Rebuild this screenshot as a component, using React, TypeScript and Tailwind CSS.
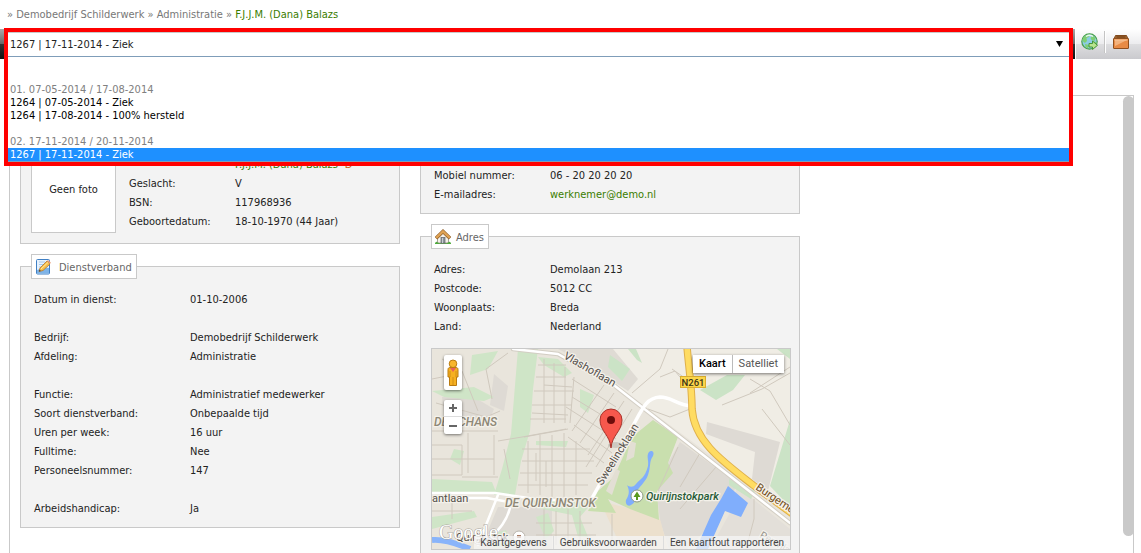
import type { ReactNode } from "react";

type Row = { label: string; value: ReactNode; spaced?: boolean };

const employment: Row[] = [
  { label: "Datum in dienst:", value: "01-10-2006" },
  { label: "Bedrijf:", value: "Demobedrijf Schilderwerk", spaced: true },
  { label: "Afdeling:", value: "Administratie" },
  { label: "Functie:", value: "Administratief medewerker", spaced: true },
  { label: "Soort dienstverband:", value: "Onbepaalde tijd" },
  { label: "Uren per week:", value: "16 uur" },
  { label: "Fulltime:", value: "Nee" },
  { label: "Personeelsnummer:", value: "147" },
  { label: "Arbeidshandicap:", value: "Ja", spaced: true },
];

const person: Row[] = [
  {
    label: "",
    value: (
      <a href="#persoon" className="text-[#3a7d00]">
        F.J.J.M. (Dana) Balazs <span className="text-[#c86414]">-D</span>
      </a>
    ),
  },
  { label: "Geslacht:", value: "V" },
  { label: "BSN:", value: "117968936" },
  { label: "Geboortedatum:", value: "18-10-1970 (44 Jaar)" },
];

const contact: Row[] = [
  { label: "Mobiel nummer:", value: "06 - 20 20 20 20" },
  {
    label: "E-mailadres:",
    value: (
      <a href="mailto:werknemer@demo.nl" className="text-[#3a7d00]">
        werknemer@demo.nl
      </a>
    ),
  },
];

const address: Row[] = [
  { label: "Adres:", value: "Demolaan 213" },
  { label: "Postcode:", value: "5012 CC" },
  { label: "Woonplaats:", value: "Breda" },
  { label: "Land:", value: "Nederland" },
];

function Rows({ rows, labelWidth }: { rows: Row[]; labelWidth: string }) {
  return (
    <table className="border-collapse leading-[19px] text-[#222]">
      <tbody>
        {rows.map((r, i) => (
          <tr key={i}>
            <th scope="row" className={`${labelWidth} p-0 text-left font-normal ${r.spaced ? "pt-[19px]" : ""}`}>
              {r.label}
            </th>
            <td className={`p-0 whitespace-nowrap ${r.spaced ? "pt-[19px]" : ""}`}>{r.value}</td>
          </tr>
        ))}
      </tbody>
    </table>
  );
}

function Legend({ icon, children }: { icon: ReactNode; children: ReactNode }) {
  return (
    <legend className="border border-[#c9c9c9] bg-white pr-1 pl-[3px] text-[#666]">
      <span className="flex h-[23px] items-center gap-[5px]">
        {icon}
        <span className="leading-[19px] pt-px">{children}</span>
      </span>
    </legend>
  );
}

function EditIcon() {
  return (
    <svg viewBox="0 0 16 16" className="mr-[3px] size-4" aria-hidden="true">
      <rect x="1.500" y=".5" width="13" height="14.500" rx="1" fill="#e6f1fc" stroke="#3f7fc4" />
      <path d="M4 3h6M4 5.500h5M4 8h3" stroke="#a6c8ec" />
      <path d="M2 11c4-1 7-3 12-2v5.500H2z" fill="#7db3e8" />
      <path d="M4 12.500 5 9 12 2l3 3-7 6.500z" fill="#f7c04a" stroke="#b5752b" strokeWidth=".8" />
      <path d="M6 10 13 3.500" stroke="#ffe6a0" />
      <path d="m12 2 1-1 2.800 2.500L15 5z" fill="#e8a07c" />
      <path d="m4 12.500.6-1.800 1.200 1.200z" fill="#333" />
    </svg>
  );
}

function HouseIcon() {
  return (
    <svg viewBox="0 0 16 16" className="size-4" aria-hidden="true">
      <path d="M0 15c.5-3 3-2.500 4-1.500h8c1-1 3.500-1.500 4 1.500z" fill="#4faa3c" />
      <path d="M2.500 8 8 3l5.500 5v6h-11z" fill="#f5f1ea" stroke="#8f8a83" strokeWidth=".8" />
      <path d="M1 9.200 8 2.500l7 6.700" fill="none" stroke="#8a5a26" strokeWidth="3.600" />
      <path d="M1.200 8.800 8 2.400l6.800 6.400" fill="none" stroke="#dfa253" strokeWidth="2.400" />
      <rect x="6" y="8.500" width="4" height="5.500" fill="#8e959c" stroke="#5f656b" strokeWidth=".7" />
      <path d="M7.500 9v5" stroke="#c8cdd2" />
      <path d="M0 15c0-2 2-2.500 4-1v1zM12 15v-1c2-1.500 4-1 4 1z" fill="#4faa3c" />
    </svg>
  );
}

function GlobeIcon() {
  return (
    <svg viewBox="0 0 18 18" className="size-[18px]" aria-hidden="true">
      <circle cx="8.500" cy="8.500" r="7.700" fill="#8ccbe4" stroke="#49a04c" strokeWidth="1.200" />
      <path d="M2 5c2-3 5-4 7-3.500L8 4 5.500 5 6 8 4 10 1.500 8zM11 2l3.500 3-1 3-3-1-1-2zM4 11l4 1-1 3.500L4.500 14zM11 8l4.500 1-1 4-3 2.500z" fill="#7fcf72" />
      <path d="M5 3.500c2-1.500 5-1.500 7 0" fill="none" stroke="#e4f6f0" strokeWidth="1.500" />
      <path d="M8 10.500h3.500V8l5 4.300-5 4.200V14H8z" fill="#b9e48f" stroke="#3c8f31" strokeWidth=".9" />
    </svg>
  );
}

function CaseIcon() {
  return (
    <svg viewBox="0 0 16 14" className="h-[14px] w-4" aria-hidden="true">
      <path d="M2.500.5h11L15 4H1z" fill="#a2672f" stroke="#80491c" />
      <path d="M3.500 2h9" stroke="#6b3b14" />
      <rect x=".5" y="3.500" width="15" height="10" rx=".5" fill="#e88b45" stroke="#8f4f1d" />
      <path d="M2 5h12L2 11z" fill="#f3b27c" />
      <path d="M1.500 5h13" stroke="#f8c79c" />
    </svg>
  );
}

function MapDrawing() {
  return (
    <svg viewBox="0 0 358 200" preserveAspectRatio="xMidYMid slice" className="block h-[200px] w-full font-[Roboto,sans-serif]" role="img" aria-label="Kaart">
      <rect width="358" height="200" fill="#e9e5dc" />
      <path d="M195 0h163v165L181 34 150 12 135 0z" fill="#f0ede5" />
      <path d="M126 0h55l25 30-10 12-50-32z" fill="#dfdbd4" />
      <path d="M248 93 305 134 295 160 255 200H237L228 172 225 145 236 114zM275 73l73 20-12 49-16-12 3-27-49-18z" fill="#dedad4" />
      <path d="M305 137 358 180v20h-80l22-40z" fill="#e3dfd9" />
      <path d="M66 158h54v42H48zM10 48l32 0 20 12-5 12-45-6zM62 25l14 12-4 25-14-6z" fill="#dedad4" />
      <path d="M168 152 200 160l28 10 8 30h-46z" fill="#ece0cd" />
      <path
        d="M86 0h20l-5 40-3 42-9 30-6 34H62l8-26 9-35zM106 8l20 2 14 14-8 4-20-12zM40 6l26-4-10 18-18 6zM0 42l42-4 20 10-10 4-40-4zM0 130l60 3 4 10H0zM22 100l10 2-4 14-10-6zM148 40l14 6-6 18-8-6zM104 92l32 0-2 6-30-2zM100 150l60 4-12 14 8 20h-10l-6-22-40-8zM104 168l12-4 6 18-8 8zM0 168l42-6 3 6-45 12zM60 185l14-4 6 14-18 5z"
        fill="#cfe5c7"
      />
      <path d="M268 41 295 26h18l-12 15-17 10zM358 71v87l-20-21zM178 6l20 14-8 12-14-14zM345 0h13v10zM297 130l26 12-4 8-22-14zM196 0h8l6 14-5-3z" fill="#cbe3c6" />
      <path d="M221 71 246 88 236 114 241 124 225 142 227 171 198 160 176 150 184 164 156 162 166 142 182 128 200 88z" fill="#c9dfae" />
      <path d="m198 92 6 2-2 14-8 4zM184 120l4 2-8 24-6-4z" fill="#e3dfd4" />
      <g stroke="#d0c9be" strokeWidth="1" fill="none">
        <path d="M106 16h28M104 28h30M102 42h40M100 56h40M98 70h36M112 10v64M122 14v60M133 18v56M142 28l-4 46M112 36l28 2M100 64l36 2" />
        <path d="M140 30l44 28M134 58l50 32M140 48l46 28M142 76l38 28M136 88l36 26M172 36l-32 46M182 44l-34 50M192 52l-36 54M200 60l-36 58M184 70l-30 48" />
        <path d="M92 88l44-8M90 100h68M90 112h72M88 124h72M86 136h70M96 92v52M108 86v60M120 86v62M132 84v64M144 92v54M104 104v28M114 112v26" />
        <path d="M0 82h66M0 96h30v30H0M36 84v40M62 86v40M0 110h62M30 128h36M10 10l20 12 16 40M60 50l-6-30 22-16M0 30l30-6M4 54l50 14 14-6M66 92l24-4 44-8M72 100l6 30" />
        <path d="M0 162h40M20 150v20M112 160v30M124 162v34M136 160v36M148 162v34M104 174h56M104 186h60M180 165v34" />
        <path d="M228 28 243 22 258 40M200 44l28-24 8-20M240 20l20 14M216 60l22 8 20-8M318 44l40-26M330 60l28 36M290 56l40-16 28-16M318 30l20 12 20 34" />
        <path d="M246 98 226 142M284 118l-36 42M322 150v20l-8 30M268 104l-20 34" />
      </g>
      <path d="M0 191c12-1 24 3 38 9" fill="none" stroke="#89b4fa" strokeWidth="6" />
      <path d="M217 103c-3 4 0 8-1 14-3 12-8 13-12 18-3 4-7 3-9 1 3 6 2 10-1 15-1 4 2 7 5 5 6-3 4-8 6-14 4-6 9-10 11-16 3-8 1-14 5-19 2-5-2-6-4-4z" fill="#80aefc" />
      <path d="M296 137 316 154 309 168 293 162 276 200H264L279 166 289 150z" fill="#80aefc" />
      <g fill="none" strokeLinecap="round" strokeLinejoin="round">
        <path d="M81 0 126 5 183 37 358 174" stroke="#d3cec4" strokeWidth="4.500" />
        <path d="M81 0 126 5 183 37 358 174M0 144h63l40 6 34 2M0 149h55l22 4M66 146 46 196M79 154c-3 20-16 30-24 38" stroke="#fff" strokeWidth="2.500" />
        <path d="M160 149 203 73C212 56 216 49 228 48 240 48 244 56 260 57" stroke="#fff" strokeWidth="3.500" />
        <path d="M255-2C257 20 260 40 260 60 262 92 290 112 321 136L362 166" stroke="#dfb04b" strokeWidth="7.500" />
        <path d="M255-2C257 20 260 40 260 60 262 92 290 112 321 136L362 166" stroke="#ffdc62" strokeWidth="5.500" />
      </g>
      <rect x="248.500" y="27.500" width="25" height="11" fill="#fbd64b" stroke="#d9ad2e" />
      <text x="261" y="36.500" fontSize="9.500" textAnchor="middle" fill="#3b3416" fontWeight="500">N261</text>
      <g fontSize="12" fill="#55504a" stroke="#f4f1ea" strokeWidth="2.500" paintOrder="stroke" strokeLinejoin="round">
        <text transform="translate(131 9) rotate(30)" fontSize="11">Vlashoflaan</text>
        <text transform="translate(170 137) rotate(-58)" fontSize="11">Sweelincklaan</text>
        <text x="0" y="153" fontSize="11">antlaan</text>
        <text x="24" y="192" fontSize="11">Quirijnstok</text>
        <text transform="translate(323 140) rotate(34)" fontSize="11" fill="#6f4a16">Burgemeester</text>
        <text transform="translate(327 188) rotate(30)" fontSize="10" fill="#96918a">Perenlaan</text>
        <text x="214" y="151" fill="#285c37" fontStyle="italic" fontWeight="500" fontSize="11">Quirijnstokpark</text>
        <g fill="#8d8776" fontStyle="italic" fontWeight="500" fontSize="12">
          <text x="2" y="77">DE SCHANS</text>
          <text x="73" y="158">DE QUIRIJNSTOK</text>
        </g>
      </g>
      <circle cx="205" cy="147" r="6" fill="#fff" stroke="#8c9a84" />
      <path d="m205 142.500 3.500 5.500h-2.500v3h-2v-3h-2.500z" fill="#5a9a1e" />
      <circle cx="87" cy="188" r="6" fill="#fff" stroke="#b9b4ac" />
      <rect x="85" y="186" width="4" height="3" fill="#a77a63" />
      <text x="7" y="190" fontSize="20" fontFamily="Liberation Serif, serif" fill="#fff" stroke="#aaa69e" strokeWidth="1" paintOrder="stroke">Google</text>
      <ellipse cx="184" cy="96" rx="8" ry="3" fill="#000" opacity=".12" />
      <path d="M179 99C178 86 168 82 168 71a11 11 0 0 1 22 0C190 82 180 86 179 99z" fill="#f7584d" stroke="#a8332b" strokeWidth="1" />
      <circle cx="179" cy="71" r="4" fill="#6e0d0b" />
    </svg>
  );
}

function AddressMap() {
  return (
    <div className="relative mt-3 overflow-hidden border border-[#c9c9c9] font-[Roboto,sans-serif]">
      <MapDrawing />
      <button type="button" aria-label="Street View" className="absolute top-[6px] left-3 flex h-[35px] w-[18px] items-center justify-center rounded-xs bg-white shadow-[0_1px_3px_rgba(0,0,0,.5)]">
        <svg viewBox="0 0 14 28" className="h-7 w-[14px]" aria-hidden="true">
          <path d="M2 10.500c0-1.500 1-2 2-2h6c1 0 2 .5 2 2V18h-1.500v8.500h-7V18H2z" fill="#f6b021" stroke="#b97a10" />
          <path d="M7 18v8M4 12v6M10 12v6" stroke="#c98914" strokeWidth=".8" />
          <circle cx="7" cy="4.800" r="3.800" fill="#f8b62d" stroke="#b97a10" />
          <path d="M4 9h6l-3 4z" fill="#e8615a" />
        </svg>
      </button>
      <div className="absolute top-[51px] left-3 flex w-[18px] flex-col divide-y divide-[#ddd] rounded-xs bg-white shadow-[0_1px_3px_rgba(0,0,0,.5)]">
        <button type="button" aria-label="Inzoomen" className="flex h-[17px] items-center justify-center">
          <svg viewBox="0 0 8 8" className="size-2" aria-hidden="true"><path d="M0 4h8M4 0v8" stroke="#666" strokeWidth="2" /></svg>
        </button>
        <button type="button" aria-label="Uitzoomen" className="flex h-[17px] items-center justify-center">
          <svg viewBox="0 0 8 8" className="size-2" aria-hidden="true"><path d="M0 4h8" stroke="#666" strokeWidth="2" /></svg>
        </button>
      </div>
      <div className="absolute top-[6px] right-[6px] flex h-[18px] divide-x divide-[#bbb] bg-white text-[11px] leading-[18px] shadow-[0_1px_3px_rgba(0,0,0,.5)]">
        <button type="button" className="px-[6px] font-medium text-black">Kaart</button>
        <button type="button" className="px-[6px] text-[#565656]">Satelliet</button>
      </div>
      <div className="absolute right-0 bottom-0 flex divide-x divide-[#ddd] bg-[#f5f5f5]/75 text-[10px] leading-[13px] text-[#444]">
        <a href="#kaartgegevens" className="px-[6px]">Kaartgegevens</a>
        <a href="#voorwaarden" className="px-[6px]">Gebruiksvoorwaarden</a>
        <a href="#kaartfout" className="px-[6px]">Een kaartfout rapporteren</a>
      </div>
    </div>
  );
}

function CaseSelect() {
  return (
    <div className="absolute -top-px right-[68px] left-1 z-10 border-4 border-[#f00] bg-white">
      <div className="relative">
        <select
          aria-label="Dossier"
          defaultValue="1267"
          className="block h-[25px] w-full appearance-none border-t border-b border-t-[#c9c9c9] border-b-[#7f9db9] bg-white pt-[2px] pl-[2px] text-[#222] outline-none"
        >
          <option value="1267">1267 | 17-11-2014 - Ziek</option>
        </select>
        <svg viewBox="0 0 7 6" className="pointer-events-none absolute top-[9px] right-[6px] h-[6px] w-[7px]" aria-hidden="true">
          <path d="M0 0h7L3.500 6z" fill="#000" />
        </svg>
      </div>
      <ul role="listbox" aria-label="Dossiers" className="border-b border-[#7f9db9] leading-[14px] text-black *:h-[13px] *:pl-[2px]">
        <li role="presentation" />
        <li role="presentation" />
        <li role="presentation" className="text-[#808080]">01. 07-05-2014 / 17-08-2014</li>
        <li role="option" aria-selected="false">1264 | 07-05-2014 - Ziek</li>
        <li role="option" aria-selected="false">1264 | 17-08-2014 - 100% hersteld</li>
        <li role="presentation" />
        <li role="presentation" className="text-[#808080]">02. 17-11-2014 / 20-11-2014</li>
        <li role="option" aria-selected="true" className="bg-[#1e90ff] text-white">1267 | 17-11-2014 - Ziek</li>
      </ul>
    </div>
  );
}

export default function App() {
  return (
    <div className="flex h-screen flex-col overflow-hidden bg-white font-['DejaVu_Sans_Condensed','DejaVu_Sans',sans-serif] text-[11px]">
      <nav aria-label="Kruimelpad" className="h-[29px] shrink-0 pt-px pl-[7px] leading-[28px] text-[#777]">
        » <a href="#bedrijf">Demobedrijf Schilderwerk</a> » <a href="#administratie">Administratie</a> »{" "}
        <a href="#persoon" className="text-[#3a7d00]">F.J.J.M. (Dana) Balazs</a>
      </nav>

      <header className="relative flex h-[30px] shrink-0">
        <div className="flex-1 bg-[linear-gradient(#aaa,#666_50%,#333_50%,#111)]" />
        <div className="flex w-[66px] items-start border-l border-white bg-[linear-gradient(#fff,#ececee_50%,#dedee0_50%,#cacace)] pt-[2px]">
          <button type="button" aria-label="Website" className="flex h-[22px] w-[29px] items-center justify-center border-r border-[#c4c4c4]">
            <GlobeIcon />
          </button>
          <button type="button" aria-label="Dossier" className="flex h-[22px] w-[30px] items-center justify-center border-l border-white">
            <CaseIcon />
          </button>
        </div>
        <CaseSelect />
      </header>

      <main className="relative mt-9 mr-[7px] ml-[9px] min-h-0 flex-1 border border-b-0 border-[#c9c9c9]">
        <div className="flex h-full items-start gap-5 overflow-hidden pt-[22px] pr-5 pl-[10px]">
          <div className="flex w-full max-w-[380px] flex-col gap-[10px]">
            <section aria-label="Persoon" className="flex gap-[13px] border border-[#c9c9c9] bg-[#f3f3f3] px-[10px] pt-7 pb-[10px]">
              <div className="flex h-[86px] w-[85px] items-center justify-center border border-[#c9c9c9] bg-white pt-px text-[#222]">Geen foto</div>
              <div className="pt-2">
                <Rows rows={person} labelWidth="w-[106px]" />
              </div>
            </section>
            <fieldset className="border border-[#c9c9c9] bg-[#f3f3f3] px-[10px] pb-[9px]">
              <Legend icon={<EditIcon />}>Dienstverband</Legend>
              <div className="pt-[11px] pl-[3px]">
                <Rows rows={employment} labelWidth="w-[156px]" />
              </div>
            </fieldset>
          </div>

          <div className="flex w-full max-w-[380px] flex-col gap-[10px]">
            <section aria-label="Contact" className="border border-[#c9c9c9] bg-[#f3f3f3] px-[13px] pt-[47px] pb-[9px]">
              <Rows rows={contact} labelWidth="w-[116px]" />
            </section>
            <fieldset className="border border-[#c9c9c9] bg-[#f3f3f3] pr-2 pb-[10px] pl-[10px]">
              <Legend icon={<HouseIcon />}>Adres</Legend>
              <div className="pt-[11px] pl-[3px]">
                <Rows rows={address} labelWidth="w-[116px]" />
              </div>
              <AddressMap />
            </fieldset>
          </div>
        </div>
        <div className="absolute top-0 -right-px bottom-[17px] w-[11px] rounded-full bg-[#c9c9c9]" />
      </main>
    </div>
  );
}
